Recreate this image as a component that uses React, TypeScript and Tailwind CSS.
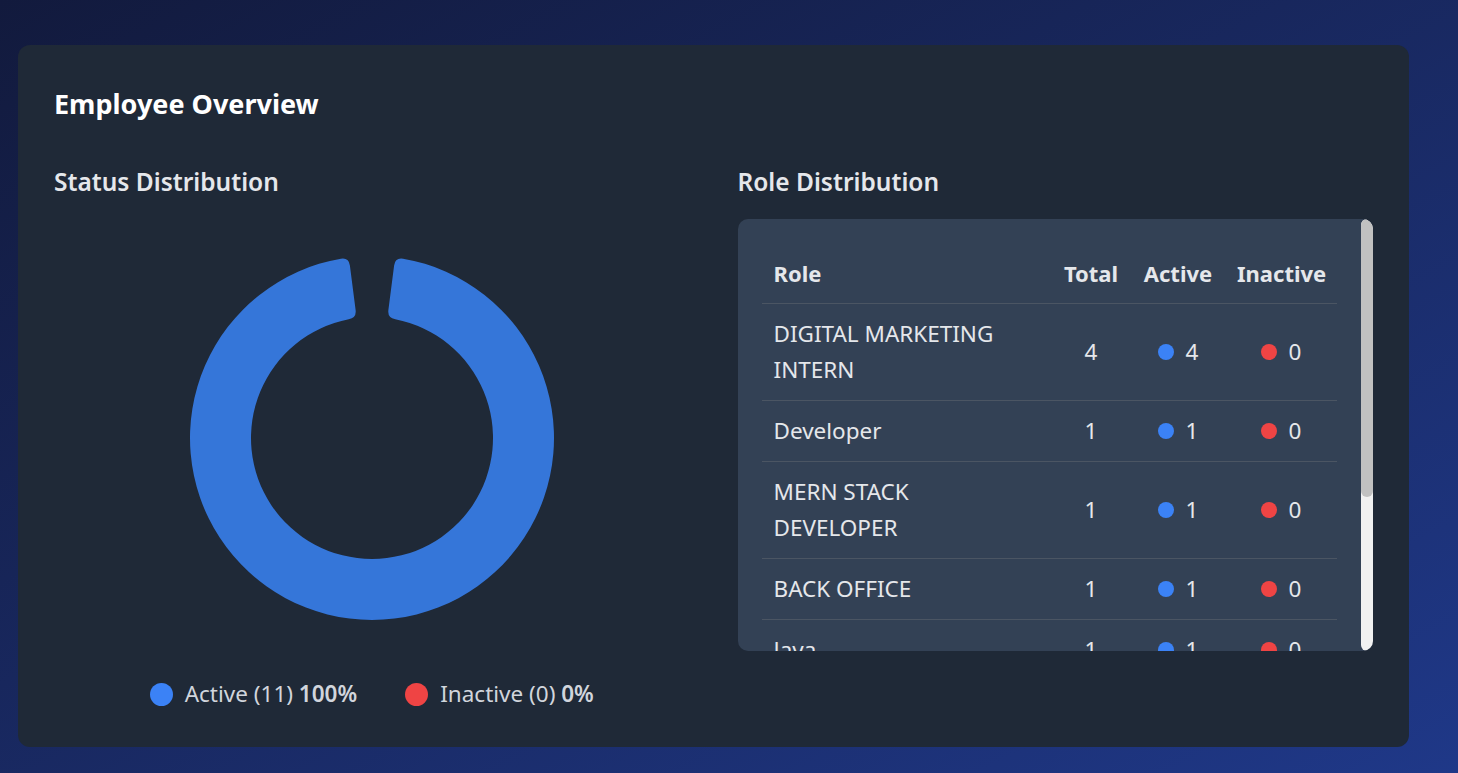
import type { ReactNode } from "react";

interface RoleRow {
  role: string;
  total: number;
  active: number;
  inactive: number;
}

const roles: RoleRow[] = [
  { role: "DIGITAL MARKETING INTERN", total: 4, active: 4, inactive: 0 },
  { role: "Developer", total: 1, active: 1, inactive: 0 },
  { role: "MERN STACK DEVELOPER", total: 1, active: 1, inactive: 0 },
  { role: "BACK OFFICE", total: 1, active: 1, inactive: 0 },
  { role: "Java", total: 1, active: 1, inactive: 0 },
  { role: "HR EXECUTIVE", total: 1, active: 1, inactive: 0 },
  { role: "Designer", total: 1, active: 1, inactive: 0 },
  { role: "SALES", total: 1, active: 1, inactive: 0 },
];

// Single 100% slice with a padding gap at the top and rounded corners
const DONUT_PATH =
  "M22.11 -172.59 Q23.12 -180.53 31.04 -179.33 " +
  "A182 182 0 1 1 -31.04 -179.33 " +
  "Q-23.12 -180.53 -22.11 -172.59 " +
  "L-16.39 -127.96 " +
  "Q-15.37 -120.02 -23.28 -118.74 " +
  "A121 121 0 1 0 23.28 -118.74 " +
  "Q15.37 -120.02 16.39 -127.96 Z";

function Dot({ color, size }: { color: string; size: string }) {
  return <span className={`inline-block shrink-0 rounded-full ${color} ${size}`} />;
}

function CountCell({ value, color }: { value: number; color: string }): ReactNode {
  return (
    <span className="inline-flex items-center gap-3">
      <Dot color={color} size="w-[16px] h-[16px]" />
      {value}
    </span>
  );
}

export default function App() {
  return (
    <div
      className="min-h-screen bg-linear-to-br from-[#121a3d] to-[#1f3888] pt-[45px] pl-[18px] pr-[49px] pb-[26px]"
      style={{ fontFamily: '"Noto Sans", "Open Sans", sans-serif' }}
    >
      <div className="rounded-xl bg-[#1f2937] px-9 pt-[41px] pb-[38px]">
        <h2 className="mb-[45px] text-[27px] leading-9 font-bold text-white">
          Employee Overview
        </h2>

        <div className="grid grid-cols-2 gap-12">
          {/* Status distribution */}
          <div className="flex flex-col">
            <h3 className="mb-[22px] text-[24.5px] leading-[30px] font-semibold text-gray-200">
              Status Distribution
            </h3>
            <div className="flex h-[438px] items-center justify-center">
              <svg width="438" height="438" viewBox="-219 -219 438 438">
                <path d={DONUT_PATH} fill="#3576d9" />
              </svg>
            </div>
            <div className="mt-[22px] flex items-center justify-center gap-12 text-[22.5px] leading-[30px] text-gray-300">
              <div className="flex items-center gap-3">
                <Dot color="bg-[#3b82f6]" size="w-[23px] h-[23px]" />
                <span>
                  Active (11) <span className="font-semibold">100%</span>
                </span>
              </div>
              <div className="flex items-center gap-3">
                <Dot color="bg-[#ef4444]" size="w-[23px] h-[23px]" />
                <span>
                  Inactive (0) <span className="font-semibold">0%</span>
                </span>
              </div>
            </div>
          </div>

          {/* Role distribution */}
          <div className="flex flex-col">
            <h3 className="mb-[22px] text-[24.5px] leading-[30px] font-semibold text-gray-200">
              Role Distribution
            </h3>
            <div className="flex h-[432px] overflow-hidden rounded-[10px] bg-[#334155]">
              <div className="min-w-0 flex-1 overflow-hidden p-6">
                <table className="w-full table-fixed border-collapse text-[22.5px] leading-9 text-gray-200">
                  <colgroup>
                    <col />
                    <col className="w-[80px]" />
                    <col className="w-[94px]" />
                    <col className="w-[112px]" />
                  </colgroup>
                  <thead>
                    <tr className="border-b border-[#4b5563] text-[22px] font-bold">
                      <th className="px-3 py-3 text-left">Role</th>
                      <th className="px-3 py-3 text-center">Total</th>
                      <th className="px-3 py-3 text-center">Active</th>
                      <th className="px-3 py-3 text-center">Inactive</th>
                    </tr>
                  </thead>
                  <tbody>
                    {roles.map((r) => (
                      <tr key={r.role} className="border-b border-[#4b5563] last:border-b-0">
                        <td className="px-3 py-3 align-middle">
                          <span className="block max-w-[235px]">{r.role}</span>
                        </td>
                        <td className="px-3 py-3 text-center align-middle">{r.total}</td>
                        <td className="px-3 py-3 text-center align-middle">
                          <CountCell value={r.active} color="bg-[#3b82f6]" />
                        </td>
                        <td className="px-3 py-3 text-center align-middle">
                          <CountCell value={r.inactive} color="bg-[#ef4444]" />
                        </td>
                      </tr>
                    ))}
                  </tbody>
                </table>
              </div>
              {/* scrollbar */}
              <div className="flex w-3 shrink-0 flex-col rounded-full bg-[#f1f1f1]">
                <div className="h-[278px] rounded-full bg-[#c1c1c1]" />
              </div>
            </div>
          </div>
        </div>
      </div>
    </div>
  );
}
